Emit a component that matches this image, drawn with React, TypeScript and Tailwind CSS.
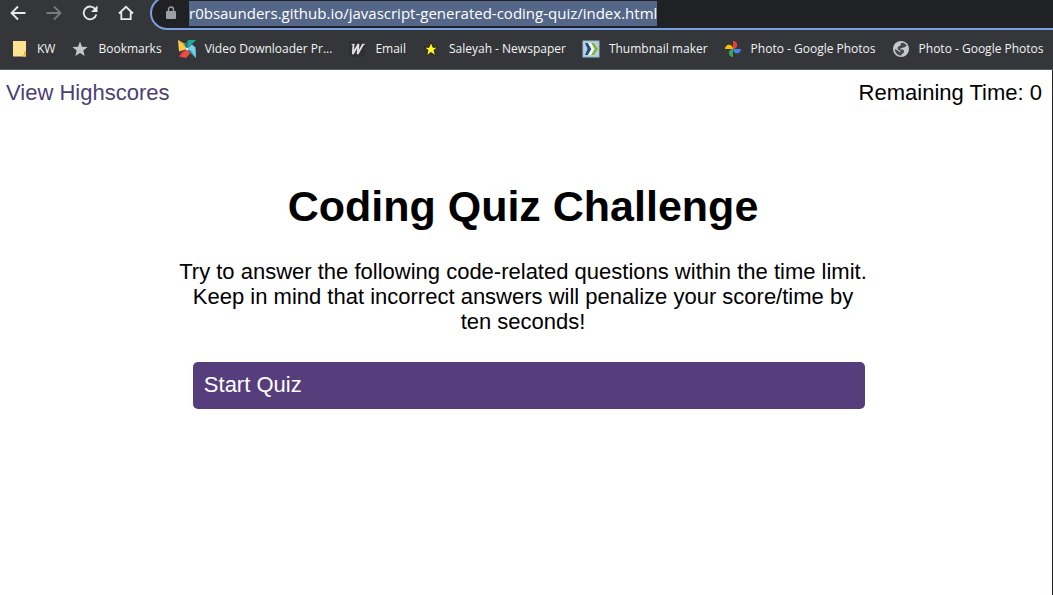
import type { ReactNode } from "react";

type Bookmark = { label: string; icon: ReactNode };

const NoteIcon = () => (
  <svg viewBox="0 0 18 18" className="size-[18px]" aria-hidden="true">
    <path d="M3 1H16V12H14.500L14.500 14.500H16V16.500H3Z" fill="#fde293" />
    <path d="M16 11V16.500H12.500V15H14.500V11Z" fill="#f6c945" />
  </svg>
);

const StarIcon = () => (
  <svg viewBox="0 0 18 18" className="size-[18px]" aria-hidden="true">
    <path d="M9 1.500L11 6.700L16.600 7L12.300 10.600L13.700 16L9 13L4.300 16L5.700 10.600L1.400 7L7 6.700Z" fill="#c3c6ca" />
  </svg>
);

const PinwheelIcon = () => (
  <svg viewBox="0 0 18 18" className="size-[18px] overflow-visible" aria-hidden="true">
    <path d="M0 0L7 4L9 9L1 11.500Z" fill="#f4d04a" />
    <path d="M0 0L7 4L9 9Z" fill="#f5a13c" />
    <path d="M6.500 4.500L10.500 0H18L9 9Z" fill="#24a79d" />
    <path d="M6.500 4.500L10.500 0L9 9Z" fill="#167b7c" />
    <path d="M9 9L14 4.500L17.500 7.500L18 18Z" fill="#7ad0ea" />
    <path d="M9 9L13 10.500L18 18Z" fill="#2d9fc4" />
    <path d="M9 9L1 16.500L8 18L12 13.500Z" fill="#ef4a43" />
    <path d="M9 9L4 11.500L1 16.500Z" fill="#d63a34" />
    <circle cx="9" cy="9" r="1.200" fill="#e8f3f5" />
  </svg>
);

const SlantedWIcon = () => (
  <svg viewBox="0 0 18 18" className="size-[18px]" fill="none" aria-hidden="true">
    <rect x="1" y="1" width="16" height="16" rx="4" fill="#302f30" />
    <path d="M5.500 4L4.800 14L10.500 4L9.600 14L15.200 4" stroke="#dedede" strokeWidth="1.900" strokeLinejoin="bevel" />
    <path d="M3.500 4.300H6.500M14 4.300H17" stroke="#dedede" strokeWidth="0.900" />
  </svg>
);

const YellowStarIcon = () => (
  <svg viewBox="0 0 18 18" className="size-[18px]" aria-hidden="true">
    <path d="M9 2L11 7.300H15.800L12 10.200L13.500 15.800L9 12.500L4.500 15.800L6 10.200L2.200 7.300H7Z" fill="#fff72c" stroke="#17170a" strokeWidth="0.800" />
  </svg>
);

const ThumbnailIcon = () => (
  <svg viewBox="0 0 18 18" className="size-[18px]" fill="none" aria-hidden="true">
    <rect x="1" y="1" width="16" height="16" fill="#b9d0e0" stroke="#9dbbcf" />
    <path d="M9 3H12L16 9L12 15H9L12.500 9Z" fill="#7db83b" />
    <path d="M3 3H6L9.500 9L6 15H3L5.500 9Z" fill="#264f78" />
    <path d="M6 3H9L12.500 9L9 15H6L9.500 9Z" fill="#f5fafc" />
  </svg>
);

const PhotosIcon = () => (
  <svg viewBox="0 0 18 18" className="size-[18px]" aria-hidden="true">
    <path d="M9 9V1C11.500 1 13.200 2.800 13.200 5S11.500 9 9 9Z" fill="#ea4335" />
    <path d="M9 9H17C17 11.500 15.200 13.200 13 13.200S9 11.500 9 9Z" fill="#4285f4" />
    <path d="M9 9V17C6.500 17 4.800 15.200 4.800 13S6.500 9 9 9Z" fill="#34a853" />
    <path d="M9 9H1C1 6.500 2.800 4.800 5 4.800S9 6.500 9 9Z" fill="#fbbc04" />
  </svg>
);

const GlobeIcon = () => (
  <svg viewBox="0 0 18 18" className="size-[18px]" aria-hidden="true">
    <circle cx="9" cy="9" r="8" fill="#c5c8cc" />
    <path d="M10 2.800C12.500 3 14 4.200 14.800 6C13 6 13.500 7.500 11.500 7.500C10 7.500 10 8.500 8.500 8.500C7.500 8.500 7.500 9.500 8.500 9.500C11 9.500 12.500 10 12 12C11.500 14 9.500 13.500 9 15.500C6 15.500 3 13 2.800 9C4.500 9.500 6 10.500 7.500 12C8.500 12.500 9 11.500 8 10.800C6 10 5 8.500 6 7C7 5.500 8.500 6.500 8.500 5C8.500 4 9 3 10 2.800Z" fill="#45484c" />
  </svg>
);

const bookmarks: Bookmark[] = [
  { label: "KW", icon: <NoteIcon /> },
  { label: "Bookmarks", icon: <StarIcon /> },
  { label: "Video Downloader Pr...", icon: <PinwheelIcon /> },
  { label: "Email", icon: <SlantedWIcon /> },
  { label: "Saleyah - Newspaper", icon: <YellowStarIcon /> },
  { label: "Thumbnail maker", icon: <ThumbnailIcon /> },
  { label: "Photo - Google Photos", icon: <PhotosIcon /> },
  { label: "Photo - Google Photos", icon: <GlobeIcon /> },
];

function NavButton({ label, muted, children }: { label: string; muted?: boolean; children: ReactNode }) {
  return (
    <button type="button" aria-label={label} className={muted ? "text-[#77797d]" : "text-[#e8eaed]"}>
      <svg viewBox="0 0 16 16" className="size-4" fill="none" stroke="currentColor" strokeWidth="1.800" aria-hidden="true">
        {children}
      </svg>
    </button>
  );
}

function BrowserBar() {
  return (
    <header className="overflow-hidden border-b border-[#5a5b5e] bg-[#35363a] font-['Open_Sans','Noto_Sans',sans-serif]">
      <div className="flex h-[31px] items-start">
        <nav aria-label="Browser" className="flex gap-5 pt-[5px] pr-4 pl-[10px]">
          <NavButton label="Back">
            <path d="M15.500 8H1.500M8 1.500L1.500 8L8 14.500" />
          </NavButton>
          <NavButton label="Forward" muted>
            <path d="M0.500 8H14.500M8 1.500L14.500 8L8 14.500" />
          </NavButton>
          <NavButton label="Reload">
            <path d="M13.500 4.500A6.400 6.400 0 1 0 14.300 9.500" />
            <path d="M15.500 0.500V7H9Z" fill="currentColor" stroke="none" />
          </NavButton>
          <NavButton label="Home">
            <path d="M1 8.500L8 1.800L15 8.500M3.300 7V14.200H12.700V7" />
          </NavButton>
        </nav>
        <div className="-mt-1 flex h-[34px] grow items-center rounded-l-full border-2 border-r-0 border-[#7b9fe3] bg-[#202124] pl-[13px]">
          <svg viewBox="0 0 12 14" className="h-[14px] w-3" fill="none" aria-hidden="true">
            <rect x="1" y="5" width="10" height="8" rx="1" fill="#9aa0a6" />
            <path d="M3.500 5.500V3.500A2.500 2.500 0 0 1 8.500 3.500V5.500" stroke="#9aa0a6" strokeWidth="1.400" />
          </svg>
          <input
            aria-label="Address"
            defaultValue="r0bsaunders.github.io/javascript-generated-coding-quiz/index.html"
            className="ml-3 h-[25px] field-sizing-content bg-[#546788] text-[15px] text-white outline-none"
          />
        </div>
      </div>
      <nav aria-label="Bookmarks" className="flex h-[38px] items-center gap-4 pb-[2px] pl-[10px] text-xs whitespace-nowrap text-[#f1f3f4]">
        {bookmarks.map(({ label, icon }, i) => (
          <a key={i} href="#" className="flex shrink-0 items-center gap-[9px]">
            {icon}
            <span>{label}</span>
          </a>
        ))}
      </nav>
    </header>
  );
}

export default function App() {
  return (
    <div className="flex min-h-screen flex-col bg-white">
      <BrowserBar />
      <div className="grow border-r border-[#202124] font-['Liberation_Sans',Arial,sans-serif] text-[22px] leading-[25px] text-black">
        <div className="flex justify-between pt-[10px] pr-[10px] pl-[6px]">
          <a href="#" className="text-[#4b3f72]">View Highscores</a>
          <p>Remaining Time: 0</p>
        </div>
        <main className="mx-auto w-[66%] pt-[76px] pr-[6px] text-center">
          <h1 className="text-[43px] leading-[50px] font-bold">Coding Quiz Challenge</h1>
          <p className="mt-[28px]">
            Try to answer the following code-related questions within the time limit. Keep in mind that incorrect answers will penalize your score/time by ten seconds!
          </p>
          <div className="mt-[28px] pr-[2px] pl-[14px]">
            <button type="button" className="block h-[47px] w-full rounded-[5px] bg-[#563d7c] px-[11px] pb-[2px] text-left text-white">
              Start Quiz
            </button>
          </div>
        </main>
      </div>
    </div>
  );
}
